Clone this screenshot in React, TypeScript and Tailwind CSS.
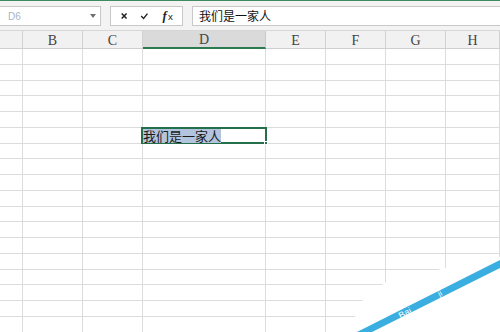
import React from 'react'

const COLS = ['', 'B', 'C', 'D', 'E', 'F', 'G', 'H']
const ROWS = Array.from({ length: 19 }, (_, i) => i + 1)

function Toolbar() {
  return (
    <div className="flex items-center h-[30px] bg-[#f3f3f3] border-b border-[#d6d6d6] pt-[1px]">
      <div className="relative flex items-center w-[102px] h-[20px] -ml-[1px] bg-white border border-[#c8c8c8]">
        <span className="pl-[8px] text-[10px] text-[#aab4c6]" style={{ fontFamily: '"Liberation Sans", sans-serif' }}>D6</span>
        <span className="absolute right-[4px] top-[7px] w-0 h-0 border-l-[3px] border-r-[3px] border-t-[4px] border-l-transparent border-r-transparent border-t-[#707070]" />
      </div>
      <div className="flex items-center ml-[9px] w-[73px] h-[20px] bg-white border border-[#c8c8c8]">
        <svg width="73" height="18" viewBox="0 0 73 18">
          <path d="M11 6.5 L16 11.5 M16 6.5 L11 11.5" stroke="#222" strokeWidth="1.6" />
          <path d="M31 9 L33.5 11.5 L37.5 6.5" stroke="#222" strokeWidth="1.4" fill="none" />
          <text x="53" y="13" fontSize="13" fontStyle="italic" fontWeight="bold" fontFamily="Liberation Serif, serif" fill="#222">f</text>
          <text x="58.5" y="13.5" fontSize="10" fontFamily="Liberation Sans, sans-serif" fill="#222">x</text>
        </svg>
      </div>
      <div className="flex items-center ml-[9px] flex-1 h-[20px] bg-white border border-r-0 border-[#c8c8c8]">
        <span className="pl-[6px] text-[12px] text-[#111]" style={{ fontFamily: '"Noto Sans CJK SC", sans-serif' }}>我们是一家人</span>
      </div>
    </div>
  )
}

export default function App() {
  return (
    <div className="relative w-[500px] h-[332px] overflow-hidden bg-white">
      <div className="h-[1px] bg-[#3f8a5e]" />
      <Toolbar />
      <div className="grid grid-cols-[23px_60px_60px_123px_60px_60px_60px_1fr]">
        {COLS.map((c) => (
          <div
            key={c || 'A'}
            className={
              c === 'D'
                ? 'h-[18px] flex items-center justify-center pt-[1px] bg-[#dadada] border-r border-[#c9c9c9] border-b-2 border-b-[#2c7a4f] text-[14px] text-[#444]'
                : 'h-[18px] flex items-center justify-center pt-[1px] bg-[#f1f1f1] border-r border-[#d2d2d2] border-b border-b-[#cfcfcf] text-[14px] text-[#444]'
            }
            style={{ fontFamily: '"Liberation Serif", serif' }}
          >
            {c}
          </div>
        ))}
        {ROWS.map((r) =>
          COLS.map((c, i) => (
            <div
              key={r + '-' + i}
              className="relative h-[15.76px] border-r border-b border-[#dcdcdc]"
            >
              {r === 6 && c === 'D' && (
                <div className="absolute -left-[2px] -right-[2px] -top-[1px] -bottom-[1px] border-2 border-[#24704a] z-10">
                  <span
                    className="absolute left-[0px] top-[0px] h-[14px] leading-[14px] bg-[#b3c4de] text-[13px] text-[#1a1a1a]"
                    style={{ fontFamily: '"Noto Sans CJK SC", sans-serif' }}
                  >
                    我们是一家人
                  </span>
                  <span className="absolute -right-[3px] -bottom-[3px] w-[4px] h-[4px] bg-[#24704a] border border-white" />
                </div>
              )}
            </div>
          ))
        )}
      </div>
      <svg className="absolute left-0 top-0 pointer-events-none" width="500" height="332" viewBox="0 0 500 332">
        <polygon points="500,257 446,268 386,282 364,297 348,332 500,332" fill="#ffffff" />
        <polygon points="345,338 500,260 500,268 360,338" fill="#3aaee0" />
        <text x="398" y="316" fontSize="9" fontFamily="Liberation Sans, sans-serif" fill="#ffffff" transform="rotate(-27 405 312)">Bai</text>
        <text x="438" y="296" fontSize="8" fontFamily="Liberation Sans, sans-serif" fill="#ffffff" transform="rotate(-27 440 293)">ji</text>
      </svg>
    </div>
  )
}
